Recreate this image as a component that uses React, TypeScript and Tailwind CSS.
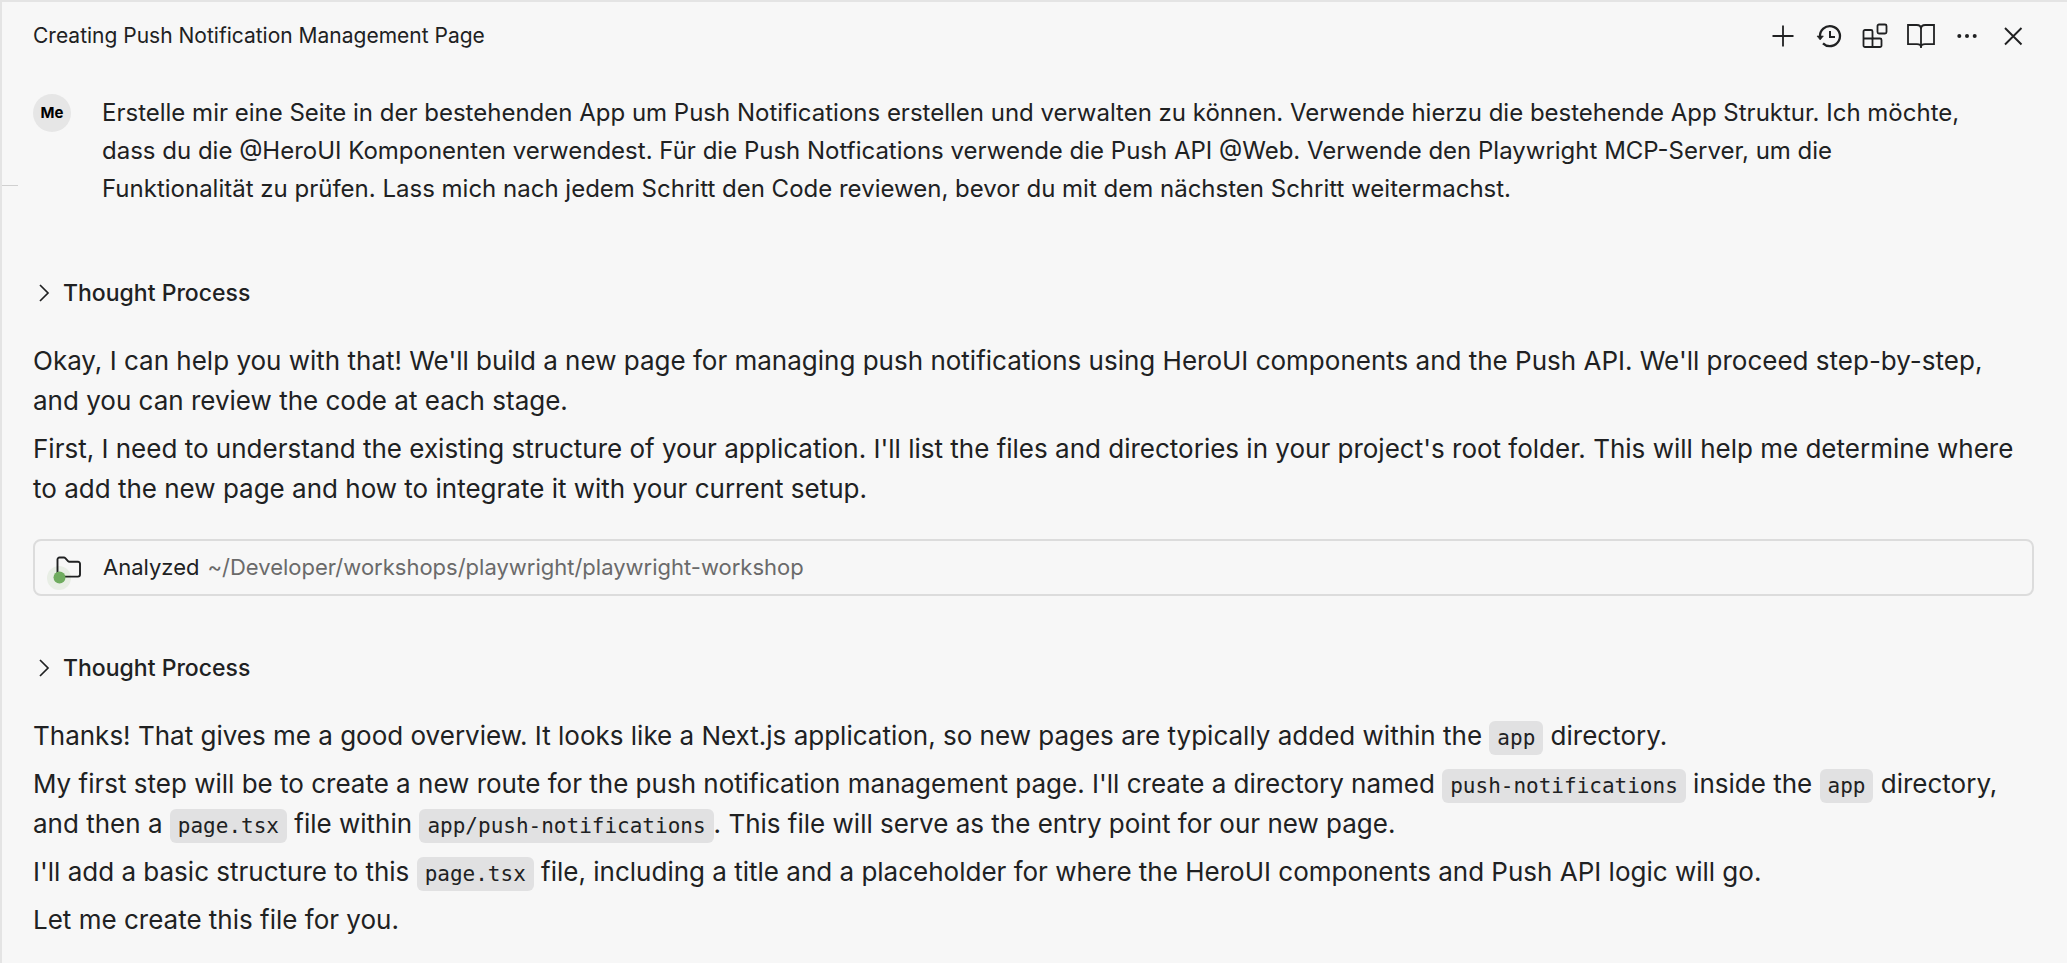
import { useState, type ReactNode } from 'react';

const actions = [
  {
    label: 'New chat',
    icon: <path d="M14 3.5v21M3.5 14h21" strokeWidth="1.8" />,
  },
  {
    label: 'History',
    icon: (
      <>
        <path d="M5 15A10 10 0 1 1 8 21.3" strokeWidth="2.3" />
        <path d="M15 9v6h5" strokeWidth="2" />
        <path d="M2 14h6.4L5.2 18z" fill="currentColor" strokeWidth="0.6" />
      </>
    ),
  },
  {
    label: 'Extensions',
    icon: (
      <g strokeWidth="1.8">
        <path d="M4 8h6a1.5 1.5 0 0 1 1.5 1.5v7H19a1.5 1.5 0 0 1 1.500 1.500v5.500A1.500 1.500 0 0 1 19 25H4a1.500 1.500 0 0 1-1.500-1.500v-14A1.500 1.500 0 0 1 4 8z" />
        <path d="M2.5 16.500h9V25" />
        <rect x="16.500" y="2.500" width="9" height="9" rx="1.500" />
      </g>
    ),
  },
  {
    label: 'Docs',
    icon: (
      <path
        d="M14 7c0-2.6-1.600-4-4.200-4H1v19.200h9c2.500 0 4 .8 4 3.300 0-2.500 1.500-3.300 4-3.300h9V3h-8.800C15.600 3 14 4.400 14 7zv19"
        strokeWidth="1.8"
      />
    ),
  },
  {
    label: 'More',
    icon: (
      <g fill="currentColor" stroke="none">
        <circle cx="6.3" cy="14" r="2" />
        <circle cx="14" cy="14" r="2" />
        <circle cx="21.7" cy="14" r="2" />
      </g>
    ),
  },
  {
    label: 'Close',
    icon: <path d="M6 6l16.5 16.5M22.5 6L6 22.5" strokeWidth="1.9" />,
  },
];

function Header() {
  return (
    <header className="flex items-center justify-between h-[67px] pl-[31px] pr-10">
      <h1 className="text-[21px] leading-8">Creating Push Notification Management Page</h1>
      <div className="flex items-center gap-[18px]">
        {actions.map(({ label, icon }) => (
          <button key={label} aria-label={label} className="rounded hover:bg-black/5">
            <svg viewBox="0 0 28 28" className="w-7 h-7" fill="none" stroke="currentColor">
              {icon}
            </svg>
          </button>
        ))}
      </div>
    </header>
  );
}

function ThoughtProcess() {
  const [open, setOpen] = useState(false);

  return (
    <button
      aria-expanded={open}
      onClick={() => setOpen(!open)}
      className="flex items-center gap-2 h-8 text-[23px] leading-8 font-medium"
    >
      <svg
        viewBox="0 0 22 22"
        className={open ? 'w-[22px] h-[22px] rotate-90' : 'w-[22px] h-[22px]'}
        fill="none"
        stroke="currentColor"
        strokeWidth="1.7"
      >
        <path d="M7 3l8 8-8 8" />
      </svg>
      Thought Process
    </button>
  );
}

function Code({ children }: { children: ReactNode }) {
  return (
    <code className="rounded-md bg-[#e1e1e2] px-2 py-[5px] font-['DejaVu_Sans_Mono',monospace] text-[21px] leading-none">
      {children}
    </code>
  );
}

function FolderIcon() {
  return (
    <span className="relative w-7 h-7">
      <span className="absolute -left-2 top-3 w-6 h-6 rounded-full bg-[#6aa84f]/10" />
      <svg viewBox="0 0 28 28" className="relative w-7 h-7 overflow-visible">
        <path
          d="M2.5 22V5.5a2 2 0 0 1 2-2h4.3a2 2 0 0 1 1.5.6l2.7 3a2 2 0 0 0 1.5.7H23a2 2 0 0 1 2 2v10.8a2 2 0 0 1-2 2H8"
          fill="none"
          stroke="currentColor"
          strokeWidth="1.9"
        />
        <circle cx="4.5" cy="23.5" r="6" fill="#6fac5f" />
      </svg>
    </span>
  );
}

export default function App() {
  return (
    <div className="min-h-screen bg-[#f7f7f7] text-[#202122] border-t-2 border-l-2 border-[#e4e4e4] font-[Inter,sans-serif]">
      <Header />

      <main className="pl-[31px] pr-[33px]">
        {/* User message */}
        <section className="relative flex items-start gap-[31px] pt-[25px] pr-16">
          <span className="absolute -left-[31px] top-[116px] w-4 h-px bg-[#d0d0d0]" />
          <span className="shrink-0 flex items-center justify-center w-[38px] h-[38px] rounded-full bg-[#e6e6e6] text-black text-[15px] font-bold">
            Me
          </span>
          <p className="text-2xl leading-[38px]">
            Erstelle mir eine Seite in der bestehenden App um Push Notifications erstellen und verwalten zu können.
            Verwende hierzu die bestehende App Struktur. Ich möchte, dass du die @HeroUI Komponenten verwendest. Für die
            Push Notfications verwende die Push API @Web. Verwende den Playwright MCP-Server, um die Funktionalität zu
            prüfen. Lass mich nach jedem Schritt den Code reviewen, bevor du mit dem nächsten Schritt weitermachst.
          </p>
        </section>

        {/* Assistant */}
        <section className="pt-[69px]">
          <ThoughtProcess />
          <div className="pt-8 space-y-2 text-[26px] leading-10">
            <p>
              Okay, I can help you with that! We'll build a new page for managing push notifications using HeroUI
              components and the Push API. We'll proceed step-by-step, and you can review the code at each stage.
            </p>
            <p>
              First, I need to understand the existing structure of your application. I'll list the files and
              directories in your project's root folder. This will help me determine where to add the new page and how
              to integrate it with your current setup.
            </p>
          </div>

          <div className="mt-[30px] flex items-center h-[57px] px-5 rounded-lg border-2 border-[#dcdcdc] text-[22px]">
            <FolderIcon />
            <span className="pl-5">Analyzed</span>
            <span className="pl-2 text-[#6a6a6a]">~/Developer/workshops/playwright/playwright-workshop</span>
          </div>
        </section>

        <section className="pt-14">
          <ThoughtProcess />
          <div className="pt-8 space-y-2 text-[26px] leading-10">
            <p>
              Thanks! That gives me a good overview. It looks like a Next.js application, so new pages are typically
              added within the <Code>app</Code> directory.
            </p>
            <p>
              My first step will be to create a new route for the push notification management page. I'll create a
              directory named <Code>push-notifications</Code> inside the <Code>app</Code> directory, and then a{' '}
              <Code>page.tsx</Code> file within <Code>app/push-notifications</Code>. This file will serve as the entry
              point for our new page.
            </p>
            <p>
              I'll add a basic structure to this <Code>page.tsx</Code> file, including a title and a placeholder for
              where the HeroUI components and Push API logic will go.
            </p>
            <p>Let me create this file for you.</p>
          </div>
        </section>
      </main>
    </div>
  );
}
